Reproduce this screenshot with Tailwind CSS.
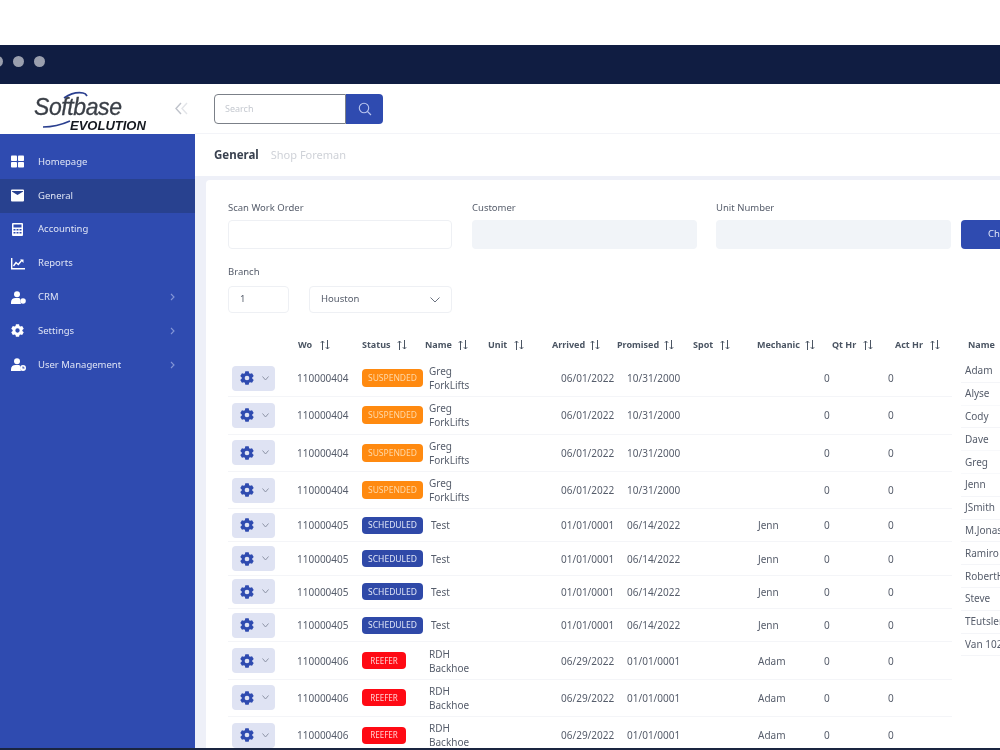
<!DOCTYPE html>
<html>
<head>
<meta charset="utf-8">
<script src="https://cdn.jsdelivr.net/npm/@tailwindcss/browser@4"></script>
<title>Softbase Evolution</title>
</head>
<body class="bg-white">
<div class="w-[1000px] h-[750px] overflow-hidden flex flex-col bg-white font-['Noto_Sans',sans-serif] text-[9.5px] text-[#565d6b] blur-[0.5px]">
  <div class="h-[45px] shrink-0 bg-white"></div>
  <div class="h-[39px] shrink-0 bg-[#101d42] flex items-center gap-[10px] -ml-[8px] pb-[6px]">
    <span class="w-[11px] h-[11px] rounded-full bg-[#9a9fae]"></span>
    <span class="w-[11px] h-[11px] rounded-full bg-[#9a9fae]"></span>
    <span class="w-[11px] h-[11px] rounded-full bg-[#9a9fae]"></span>
  </div>
  <div class="flex-1 min-h-0 flex">
    <aside class="w-[195px] shrink-0 flex flex-col">
      <div class="h-[50px] shrink-0 bg-white relative">
        <svg class="absolute left-[40px] top-[4px]" width="52" height="42" viewBox="0 0 52 42" fill="none" stroke="#2a3f8f" stroke-width="1.7"><path d="M24 10C30 6 37 4 43 5c2 .3 3 1 4 3"/><path d="M3 39C13 39 21 37 30 33"/></svg>
        <div class="absolute left-[34px] top-[11px] font-['Liberation_Sans',sans-serif] italic font-normal text-[23px] leading-[24px] tracking-[-0.4px] text-[#3a3f47] [-webkit-text-stroke:0.3px_#3a3f47]">Softbase</div>
        <div class="absolute left-[70px] top-[36px] font-['Liberation_Sans',sans-serif] italic font-bold text-[13px] leading-[12px] text-[#14181f]">EVOLUTION</div>
        <svg class="absolute left-[175px] top-[18px]" width="13" height="13" viewBox="0 0 13 13" fill="none" stroke-width="1.4"><path d="M6 1 1 6.500 6 12" stroke="#bfc3cb"/><path d="M12 1 7 6.500 12 12" stroke="#e2e4e8"/></svg>
      </div>
      <nav class="flex-1 bg-[#2f4bb0] pt-[11px] text-[#dfe4f5]">
        <div class="h-[33.8px] flex items-center pl-[11px]">
          <svg class="w-[13px] h-[13px] mr-[14px]" viewBox="0 0 13 13" fill="#fff"><rect x="0" y="0.5" width="6" height="5.5" rx="0.8"/><rect x="7" y="0.5" width="6" height="5.5" rx="0.8"/><rect x="0" y="7" width="6" height="5.5" rx="0.8"/><rect x="7" y="7" width="6" height="5.5" rx="0.8"/></svg>
          <span>Homepage</span>
        </div>
        <div class="h-[33.8px] flex items-center pl-[11px] bg-[#28418f]">
          <svg class="w-[13px] h-[13px] mr-[14px]" viewBox="0 0 13 13" fill="#fff"><path fill-rule="evenodd" d="M1 .5h11a1 1 0 0 1 1 1v10a1 1 0 0 1-1 1H1a1 1 0 0 1-1-1v-10a1 1 0 0 1 1-1zM.8 2.500 6.500 6 12.200 2.500 12 2H1z"/></svg>
          <span>General</span>
        </div>
        <div class="h-[33.8px] flex items-center pl-[11px]">
          <svg class="w-[13px] h-[13px] mr-[14px]" viewBox="0 0 13 13" fill="#fff"><path fill-rule="evenodd" d="M2 0h9a1 1 0 0 1 1 1v11a1 1 0 0 1-1 1H2a1 1 0 0 1-1-1V1a1 1 0 0 1 1-1zm.5 1.500v3h8v-3zm0 4.500v1.500h2V6zm3 0v1.500h2V6zm3 0v1.500h2V6zm-6 3v1.500h2V9zm3 0v1.500h2V9zm3 0v1.500h2V9z"/></svg>
          <span>Accounting</span>
        </div>
        <div class="h-[33.8px] flex items-center pl-[11px]">
          <svg class="w-[14px] h-[13px] mr-[13px]" viewBox="0 0 14 13" fill="none" stroke="#fff"><path d="M.7 1v10.800H14" stroke-width="1.400"/><path d="M2.500 9 5 5.500l2.300 2L11 3" stroke-width="1.400"/><path d="M9 2.500h3.500V6z" fill="#fff" stroke="none"/></svg>
          <span>Reports</span>
        </div>
        <div class="h-[33.8px] flex items-center pl-[11px] pr-[20px]">
          <svg class="w-[15px] h-[13px] mr-[12px]" viewBox="0 0 15 13" fill="#fff"><circle cx="6" cy="3.200" r="3"/><path d="M0 13v-1.800C0 8.500 2 7 4.500 7h3C8.200 7 9 7.300 9 8c0 2 .5 3.500 1 5z"/><circle cx="12" cy="10" r="2.800"/></svg>
          <span class="flex-1">CRM</span>
          <svg width="5" height="8" viewBox="0 0 5 8" fill="none" stroke="#8496d6" stroke-width="1.100"><path d="M1 1l3 3-3 3"/></svg>
        </div>
        <div class="h-[33.8px] flex items-center pl-[11px] pr-[20px]">
          <svg class="w-[13px] h-[13px] mr-[14px]" viewBox="0 0 24 24" fill="#fff"><path fill-rule="evenodd" d="M9.100.36H14.900L15.660 3.780 17.290 4.720 20.630 3.660 23.540 8.690 20.950 11.060V12.940L23.540 15.310 20.630 20.340 17.290 19.280 15.660 20.220 14.900 23.640H9.100L8.340 20.220 6.710 19.280 3.370 20.340.46 15.310 3.050 12.940V11.060L.46 8.690 3.370 3.660 6.710 4.720 8.340 3.780ZM12 8a4 4 0 1 0 0 8 4 4 0 0 0 0-8Z"/></svg>
          <span class="flex-1">Settings</span>
          <svg width="5" height="8" viewBox="0 0 5 8" fill="none" stroke="#8496d6" stroke-width="1.100"><path d="M1 1l3 3-3 3"/></svg>
        </div>
        <div class="h-[33.8px] flex items-center pl-[11px] pr-[20px]">
          <svg class="w-[15px] h-[13px] mr-[12px]" viewBox="0 0 15 13" fill="#fff"><circle cx="6" cy="3.200" r="3"/><path d="M0 13v-1.800C0 8.500 2 7 4.500 7h3C8.200 7 9 7.300 9 8c0 2 .5 3.500 1 5z"/><path fill-rule="evenodd" d="M12 7a3 3 0 1 1 0 6 3 3 0 0 1 0-6zm-.5 1.500v2h2v-1h-1v-1z"/></svg>
          <span class="flex-1">User Management</span>
          <svg width="5" height="8" viewBox="0 0 5 8" fill="none" stroke="#8496d6" stroke-width="1.100"><path d="M1 1l3 3-3 3"/></svg>
        </div>
      </nav>
    </aside>
    <main class="flex-1 min-w-0 flex flex-col bg-[#eef0f8]">
      <div class="h-[50px] shrink-0 bg-white border-b border-[#f3f4f8] pl-[19px] flex items-center">
        <div class="flex w-[169px] h-[30px] rounded-[4px]">
          <div class="w-[132px] border border-[#7b8088] rounded-l-[4px] pl-[10px] flex items-center text-[9px] text-[#c5c9d0]">Search</div>
          <div class="flex-1 bg-[#2f4bb0] rounded-r-[4px] flex items-center justify-center">
            <svg width="14" height="14" viewBox="0 0 14 14" fill="none" stroke="#b9c5ee" stroke-width="1.100"><circle cx="6" cy="6" r="4.700"/><path d="M9.500 9.500 13 13"/></svg>
          </div>
        </div>
      </div>
      <div class="h-[42px] shrink-0 bg-white pl-[19px] flex items-center gap-[12px]">
        <span class="text-[11.5px] font-bold text-[#3a4250]">General</span>
        <span class="text-[11px] text-[#cfd2d8]">Shop Foreman</span>
      </div>
      <section class="flex-1 min-h-0 ml-[11px] mt-[4px] bg-white rounded-tl-[4px] pl-[22px] pt-[21px] overflow-hidden">
        <div class="flex items-end">
          <label class="w-[224px] shrink-0 mr-[20px] flex flex-col gap-[5px]"><span class="leading-[14px]">Scan Work Order</span><span class="h-[29px] rounded-[4px] border border-[#eef0f4] bg-white"></span></label>
          <label class="w-[225px] shrink-0 mr-[19px] flex flex-col gap-[5px]"><span class="leading-[14px]">Customer</span><span class="h-[29px] rounded-[4px] bg-[#f1f4f8]"></span></label>
          <label class="w-[235px] shrink-0 mr-[10px] flex flex-col gap-[5px]"><span class="leading-[14px]">Unit Number</span><span class="h-[29px] rounded-[4px] bg-[#f1f4f8]"></span></label>
          <div class="w-[90px] shrink-0 h-[29px] rounded-[4px] bg-[#2f4bb0] text-[#dfe5f7] pl-[27px] flex items-center whitespace-nowrap">Check In</div>
        </div>
        <div class="mt-[16px] leading-[14px]">Branch</div>
        <div class="mt-[7px] flex gap-[20px]">
          <div class="w-[61px] h-[27px] rounded-[4px] border border-[#eef0f4] pl-[11px] flex items-center">1</div>
          <div class="w-[143px] h-[27px] rounded-[4px] border border-[#eef0f4] px-[11px] flex items-center justify-between">
            <span>Houston</span>
            <svg width="10" height="6" viewBox="0 0 10 6" fill="none" stroke="#6b7280" stroke-width="1"><path d="M.5.500 5 5l4.500-4.500"/></svg>
          </div>
        </div>
        <div class="mt-[17px] flex gap-[9px] w-[900px]">
          <div class="w-[724px] shrink-0">
            <div class="h-[30px] grid grid-cols-[70px_64px_63px_63px_64px_65px_76px_64px_75px_63px_57px] items-center font-bold text-[9px] text-[#4b5563]">
              <span></span>
              <span class="flex items-center gap-[8px]">Wo <svg width="10" height="10" viewBox="0 0 10 10" fill="none" stroke="#4b5563"><path d="M2.500 10V1M.8 2.800 2.500 1l1.700 1.800M7.500 0v9M5.800 7.200 7.500 9l1.700-1.800"/></svg></span>
              <span class="flex items-center gap-[6px]">Status <svg width="10" height="10" viewBox="0 0 10 10" fill="none" stroke="#4b5563"><path d="M2.500 10V1M.8 2.800 2.500 1l1.700 1.800M7.500 0v9M5.800 7.200 7.500 9l1.700-1.800"/></svg></span>
              <span class="flex items-center gap-[6px]">Name <svg width="10" height="10" viewBox="0 0 10 10" fill="none" stroke="#4b5563"><path d="M2.500 10V1M.8 2.800 2.500 1l1.700 1.800M7.500 0v9M5.800 7.200 7.500 9l1.700-1.800"/></svg></span>
              <span class="flex items-center gap-[7px]">Unit <svg width="10" height="10" viewBox="0 0 10 10" fill="none" stroke="#4b5563"><path d="M2.500 10V1M.8 2.800 2.500 1l1.700 1.800M7.500 0v9M5.800 7.200 7.500 9l1.700-1.800"/></svg></span>
              <span class="flex items-center gap-[5px]">Arrived <svg width="10" height="10" viewBox="0 0 10 10" fill="none" stroke="#4b5563"><path d="M2.500 10V1M.8 2.800 2.500 1l1.700 1.800M7.500 0v9M5.800 7.200 7.500 9l1.700-1.800"/></svg></span>
              <span class="flex items-center gap-[5px]">Promised <svg width="10" height="10" viewBox="0 0 10 10" fill="none" stroke="#4b5563"><path d="M2.500 10V1M.8 2.800 2.500 1l1.700 1.800M7.500 0v9M5.800 7.200 7.500 9l1.700-1.800"/></svg></span>
              <span class="flex items-center gap-[7px]">Spot <svg width="10" height="10" viewBox="0 0 10 10" fill="none" stroke="#4b5563"><path d="M2.500 10V1M.8 2.800 2.500 1l1.700 1.800M7.500 0v9M5.800 7.200 7.500 9l1.700-1.800"/></svg></span>
              <span class="flex items-center gap-[5px]">Mechanic <svg width="10" height="10" viewBox="0 0 10 10" fill="none" stroke="#4b5563"><path d="M2.500 10V1M.8 2.800 2.500 1l1.700 1.800M7.500 0v9M5.800 7.200 7.500 9l1.700-1.800"/></svg></span>
              <span class="flex items-center gap-[7px]">Qt Hr <svg width="10" height="10" viewBox="0 0 10 10" fill="none" stroke="#4b5563"><path d="M2.500 10V1M.8 2.800 2.500 1l1.700 1.800M7.500 0v9M5.800 7.200 7.500 9l1.700-1.800"/></svg></span>
              <span class="flex items-center gap-[7px] whitespace-nowrap">Act Hr <svg width="10" height="10" viewBox="0 0 10 10" fill="none" stroke="#4b5563"><path d="M2.500 10V1M.8 2.800 2.500 1l1.700 1.800M7.500 0v9M5.800 7.200 7.500 9l1.700-1.800"/></svg></span>
            </div>

            <!-- rows: suspended -->
            <div class="h-[37.3px] grid grid-cols-[69px_65px_67px_55px_77px_66px_66px_65px_66px_64px_64px] items-center border-b border-[#f4f5f8] text-[10px] leading-[14px]">
              <div class="ml-[4px] w-[43px] h-[25px] rounded-[4px] bg-[#dfe3f3] flex items-center pl-[8px] gap-[8px]"><svg width="14" height="14" viewBox="0 0 24 24" fill="#2f4bb0"><path fill-rule="evenodd" d="M9.100.36H14.900L15.660 3.780 17.290 4.720 20.630 3.660 23.540 8.690 20.950 11.060V12.940L23.540 15.310 20.630 20.340 17.290 19.280 15.660 20.220 14.900 23.640H9.100L8.340 20.220 6.710 19.280 3.370 20.340.46 15.310 3.050 12.940V11.060L.46 8.690 3.370 3.660 6.710 4.720 8.340 3.780ZM12 8a4 4 0 1 0 0 8 4 4 0 0 0 0-8Z"/></svg><svg width="7" height="5" viewBox="0 0 7 5" fill="none" stroke="#8d94a6"><path d="M.5.500 3.500 4l3-3.500"/></svg></div>
              <span>110000404</span>
              <div><span class="flex items-center justify-center w-[61px] h-[18px] rounded-[4px] bg-[#ff8a10] text-[#ffd8a6] text-[8.5px]">SUSPENDED</span></div>
              <span>Greg ForkLifts</span><span></span><span>06/01/2022</span><span>10/31/2000</span><span></span><span></span><span>0</span><span>0</span>
            </div>
            <div class="h-[37.3px] grid grid-cols-[69px_65px_67px_55px_77px_66px_66px_65px_66px_64px_64px] items-center border-b border-[#f4f5f8] text-[10px] leading-[14px]">
              <div class="ml-[4px] w-[43px] h-[25px] rounded-[4px] bg-[#dfe3f3] flex items-center pl-[8px] gap-[8px]"><svg width="14" height="14" viewBox="0 0 24 24" fill="#2f4bb0"><path fill-rule="evenodd" d="M9.100.36H14.900L15.660 3.780 17.290 4.720 20.630 3.660 23.540 8.690 20.950 11.060V12.940L23.540 15.310 20.630 20.340 17.290 19.280 15.660 20.220 14.900 23.640H9.100L8.340 20.220 6.710 19.280 3.370 20.340.46 15.310 3.050 12.940V11.060L.46 8.690 3.370 3.660 6.710 4.720 8.340 3.780ZM12 8a4 4 0 1 0 0 8 4 4 0 0 0 0-8Z"/></svg><svg width="7" height="5" viewBox="0 0 7 5" fill="none" stroke="#8d94a6"><path d="M.5.500 3.500 4l3-3.500"/></svg></div>
              <span>110000404</span>
              <div><span class="flex items-center justify-center w-[61px] h-[18px] rounded-[4px] bg-[#ff8a10] text-[#ffd8a6] text-[8.5px]">SUSPENDED</span></div>
              <span>Greg ForkLifts</span><span></span><span>06/01/2022</span><span>10/31/2000</span><span></span><span></span><span>0</span><span>0</span>
            </div>
            <div class="h-[37.3px] grid grid-cols-[69px_65px_67px_55px_77px_66px_66px_65px_66px_64px_64px] items-center border-b border-[#f4f5f8] text-[10px] leading-[14px]">
              <div class="ml-[4px] w-[43px] h-[25px] rounded-[4px] bg-[#dfe3f3] flex items-center pl-[8px] gap-[8px]"><svg width="14" height="14" viewBox="0 0 24 24" fill="#2f4bb0"><path fill-rule="evenodd" d="M9.100.36H14.900L15.660 3.780 17.290 4.720 20.630 3.660 23.540 8.690 20.950 11.060V12.940L23.540 15.310 20.630 20.340 17.290 19.280 15.660 20.220 14.900 23.640H9.100L8.340 20.220 6.710 19.280 3.370 20.340.46 15.310 3.050 12.940V11.060L.46 8.690 3.370 3.660 6.710 4.720 8.340 3.780ZM12 8a4 4 0 1 0 0 8 4 4 0 0 0 0-8Z"/></svg><svg width="7" height="5" viewBox="0 0 7 5" fill="none" stroke="#8d94a6"><path d="M.5.500 3.500 4l3-3.500"/></svg></div>
              <span>110000404</span>
              <div><span class="flex items-center justify-center w-[61px] h-[18px] rounded-[4px] bg-[#ff8a10] text-[#ffd8a6] text-[8.5px]">SUSPENDED</span></div>
              <span>Greg ForkLifts</span><span></span><span>06/01/2022</span><span>10/31/2000</span><span></span><span></span><span>0</span><span>0</span>
            </div>
            <div class="h-[37.3px] grid grid-cols-[69px_65px_67px_55px_77px_66px_66px_65px_66px_64px_64px] items-center border-b border-[#f4f5f8] text-[10px] leading-[14px]">
              <div class="ml-[4px] w-[43px] h-[25px] rounded-[4px] bg-[#dfe3f3] flex items-center pl-[8px] gap-[8px]"><svg width="14" height="14" viewBox="0 0 24 24" fill="#2f4bb0"><path fill-rule="evenodd" d="M9.100.36H14.900L15.660 3.780 17.290 4.720 20.630 3.660 23.540 8.690 20.950 11.060V12.940L23.540 15.310 20.630 20.340 17.290 19.280 15.660 20.220 14.900 23.640H9.100L8.340 20.220 6.710 19.280 3.370 20.340.46 15.310 3.050 12.940V11.060L.46 8.690 3.370 3.660 6.710 4.720 8.340 3.780ZM12 8a4 4 0 1 0 0 8 4 4 0 0 0 0-8Z"/></svg><svg width="7" height="5" viewBox="0 0 7 5" fill="none" stroke="#8d94a6"><path d="M.5.500 3.500 4l3-3.500"/></svg></div>
              <span>110000404</span>
              <div><span class="flex items-center justify-center w-[61px] h-[18px] rounded-[4px] bg-[#ff8a10] text-[#ffd8a6] text-[8.5px]">SUSPENDED</span></div>
              <span>Greg ForkLifts</span><span></span><span>06/01/2022</span><span>10/31/2000</span><span></span><span></span><span>0</span><span>0</span>
            </div>

            <!-- rows: scheduled -->
            <div class="h-[33.3px] grid grid-cols-[69px_65px_67px_55px_77px_66px_66px_65px_66px_64px_64px] items-center border-b border-[#f4f5f8] text-[10px] leading-[14px]">
              <div class="ml-[4px] w-[43px] h-[25px] rounded-[4px] bg-[#dfe3f3] flex items-center pl-[8px] gap-[8px]"><svg width="14" height="14" viewBox="0 0 24 24" fill="#2f4bb0"><path fill-rule="evenodd" d="M9.100.36H14.900L15.660 3.780 17.290 4.720 20.630 3.660 23.540 8.690 20.950 11.060V12.940L23.540 15.310 20.630 20.340 17.290 19.280 15.660 20.220 14.900 23.640H9.100L8.340 20.220 6.710 19.280 3.370 20.340.46 15.310 3.050 12.940V11.060L.46 8.690 3.370 3.660 6.710 4.720 8.340 3.780ZM12 8a4 4 0 1 0 0 8 4 4 0 0 0 0-8Z"/></svg><svg width="7" height="5" viewBox="0 0 7 5" fill="none" stroke="#8d94a6"><path d="M.5.500 3.500 4l3-3.500"/></svg></div>
              <span>110000405</span>
              <div><span class="flex items-center justify-center w-[61px] h-[17px] rounded-[4px] bg-[#2f49a8] text-[#dfe5f7] text-[8.5px]">SCHEDULED</span></div>
              <span class="ml-[2px]">Test</span><span></span><span>01/01/0001</span><span>06/14/2022</span><span></span><span>Jenn</span><span>0</span><span>0</span>
            </div>
            <div class="h-[33.3px] grid grid-cols-[69px_65px_67px_55px_77px_66px_66px_65px_66px_64px_64px] items-center border-b border-[#f4f5f8] text-[10px] leading-[14px]">
              <div class="ml-[4px] w-[43px] h-[25px] rounded-[4px] bg-[#dfe3f3] flex items-center pl-[8px] gap-[8px]"><svg width="14" height="14" viewBox="0 0 24 24" fill="#2f4bb0"><path fill-rule="evenodd" d="M9.100.36H14.900L15.660 3.780 17.290 4.720 20.630 3.660 23.540 8.690 20.950 11.060V12.940L23.540 15.310 20.630 20.340 17.290 19.280 15.660 20.220 14.900 23.640H9.100L8.340 20.220 6.710 19.280 3.370 20.340.46 15.310 3.050 12.940V11.060L.46 8.690 3.370 3.660 6.710 4.720 8.340 3.780ZM12 8a4 4 0 1 0 0 8 4 4 0 0 0 0-8Z"/></svg><svg width="7" height="5" viewBox="0 0 7 5" fill="none" stroke="#8d94a6"><path d="M.5.500 3.500 4l3-3.500"/></svg></div>
              <span>110000405</span>
              <div><span class="flex items-center justify-center w-[61px] h-[17px] rounded-[4px] bg-[#2f49a8] text-[#dfe5f7] text-[8.5px]">SCHEDULED</span></div>
              <span class="ml-[2px]">Test</span><span></span><span>01/01/0001</span><span>06/14/2022</span><span></span><span>Jenn</span><span>0</span><span>0</span>
            </div>
            <div class="h-[33.3px] grid grid-cols-[69px_65px_67px_55px_77px_66px_66px_65px_66px_64px_64px] items-center border-b border-[#f4f5f8] text-[10px] leading-[14px]">
              <div class="ml-[4px] w-[43px] h-[25px] rounded-[4px] bg-[#dfe3f3] flex items-center pl-[8px] gap-[8px]"><svg width="14" height="14" viewBox="0 0 24 24" fill="#2f4bb0"><path fill-rule="evenodd" d="M9.100.36H14.900L15.660 3.780 17.290 4.720 20.630 3.660 23.540 8.690 20.950 11.060V12.940L23.540 15.310 20.630 20.340 17.290 19.280 15.660 20.220 14.900 23.640H9.100L8.340 20.220 6.710 19.280 3.370 20.340.46 15.310 3.050 12.940V11.060L.46 8.690 3.370 3.660 6.710 4.720 8.340 3.780ZM12 8a4 4 0 1 0 0 8 4 4 0 0 0 0-8Z"/></svg><svg width="7" height="5" viewBox="0 0 7 5" fill="none" stroke="#8d94a6"><path d="M.5.500 3.500 4l3-3.500"/></svg></div>
              <span>110000405</span>
              <div><span class="flex items-center justify-center w-[61px] h-[17px] rounded-[4px] bg-[#2f49a8] text-[#dfe5f7] text-[8.5px]">SCHEDULED</span></div>
              <span class="ml-[2px]">Test</span><span></span><span>01/01/0001</span><span>06/14/2022</span><span></span><span>Jenn</span><span>0</span><span>0</span>
            </div>
            <div class="h-[33.3px] grid grid-cols-[69px_65px_67px_55px_77px_66px_66px_65px_66px_64px_64px] items-center border-b border-[#f4f5f8] text-[10px] leading-[14px]">
              <div class="ml-[4px] w-[43px] h-[25px] rounded-[4px] bg-[#dfe3f3] flex items-center pl-[8px] gap-[8px]"><svg width="14" height="14" viewBox="0 0 24 24" fill="#2f4bb0"><path fill-rule="evenodd" d="M9.100.36H14.900L15.660 3.780 17.290 4.720 20.630 3.660 23.540 8.690 20.950 11.060V12.940L23.540 15.310 20.630 20.340 17.290 19.280 15.660 20.220 14.900 23.640H9.100L8.340 20.220 6.710 19.280 3.370 20.340.46 15.310 3.050 12.940V11.060L.46 8.690 3.370 3.660 6.710 4.720 8.340 3.780ZM12 8a4 4 0 1 0 0 8 4 4 0 0 0 0-8Z"/></svg><svg width="7" height="5" viewBox="0 0 7 5" fill="none" stroke="#8d94a6"><path d="M.5.500 3.500 4l3-3.500"/></svg></div>
              <span>110000405</span>
              <div><span class="flex items-center justify-center w-[61px] h-[17px] rounded-[4px] bg-[#2f49a8] text-[#dfe5f7] text-[8.5px]">SCHEDULED</span></div>
              <span class="ml-[2px]">Test</span><span></span><span>01/01/0001</span><span>06/14/2022</span><span></span><span>Jenn</span><span>0</span><span>0</span>
            </div>

            <!-- rows: reefer -->
            <div class="h-[37.3px] grid grid-cols-[69px_65px_67px_55px_77px_66px_66px_65px_66px_64px_64px] items-center border-b border-[#f4f5f8] text-[10px] leading-[14px]">
              <div class="ml-[4px] w-[43px] h-[25px] rounded-[4px] bg-[#dfe3f3] flex items-center pl-[8px] gap-[8px]"><svg width="14" height="14" viewBox="0 0 24 24" fill="#2f4bb0"><path fill-rule="evenodd" d="M9.100.36H14.900L15.660 3.780 17.290 4.720 20.630 3.660 23.540 8.690 20.950 11.060V12.940L23.540 15.310 20.630 20.340 17.290 19.280 15.660 20.220 14.900 23.640H9.100L8.340 20.220 6.710 19.280 3.370 20.340.46 15.310 3.050 12.940V11.060L.46 8.690 3.370 3.660 6.710 4.720 8.340 3.780ZM12 8a4 4 0 1 0 0 8 4 4 0 0 0 0-8Z"/></svg><svg width="7" height="5" viewBox="0 0 7 5" fill="none" stroke="#8d94a6"><path d="M.5.500 3.500 4l3-3.500"/></svg></div>
              <span>110000406</span>
              <div><span class="flex items-center justify-center w-[44px] h-[17px] rounded-[4px] bg-[#ff0a14] text-[#ffd0d0] text-[8px]">REEFER</span></div>
              <span>RDH Backhoe</span><span></span><span>06/29/2022</span><span>01/01/0001</span><span></span><span>Adam</span><span>0</span><span>0</span>
            </div>
            <div class="h-[37.3px] grid grid-cols-[69px_65px_67px_55px_77px_66px_66px_65px_66px_64px_64px] items-center border-b border-[#f4f5f8] text-[10px] leading-[14px]">
              <div class="ml-[4px] w-[43px] h-[25px] rounded-[4px] bg-[#dfe3f3] flex items-center pl-[8px] gap-[8px]"><svg width="14" height="14" viewBox="0 0 24 24" fill="#2f4bb0"><path fill-rule="evenodd" d="M9.100.36H14.900L15.660 3.780 17.290 4.720 20.630 3.660 23.540 8.690 20.950 11.060V12.940L23.540 15.310 20.630 20.340 17.290 19.280 15.660 20.220 14.900 23.640H9.100L8.340 20.220 6.710 19.280 3.370 20.340.46 15.310 3.050 12.940V11.060L.46 8.690 3.370 3.660 6.710 4.720 8.340 3.780ZM12 8a4 4 0 1 0 0 8 4 4 0 0 0 0-8Z"/></svg><svg width="7" height="5" viewBox="0 0 7 5" fill="none" stroke="#8d94a6"><path d="M.5.500 3.500 4l3-3.500"/></svg></div>
              <span>110000406</span>
              <div><span class="flex items-center justify-center w-[44px] h-[17px] rounded-[4px] bg-[#ff0a14] text-[#ffd0d0] text-[8px]">REEFER</span></div>
              <span>RDH Backhoe</span><span></span><span>06/29/2022</span><span>01/01/0001</span><span></span><span>Adam</span><span>0</span><span>0</span>
            </div>
            <div class="h-[37.3px] grid grid-cols-[69px_65px_67px_55px_77px_66px_66px_65px_66px_64px_64px] items-center border-b border-[#f4f5f8] text-[10px] leading-[14px]">
              <div class="ml-[4px] w-[43px] h-[25px] rounded-[4px] bg-[#dfe3f3] flex items-center pl-[8px] gap-[8px]"><svg width="14" height="14" viewBox="0 0 24 24" fill="#2f4bb0"><path fill-rule="evenodd" d="M9.100.36H14.900L15.660 3.780 17.290 4.720 20.630 3.660 23.540 8.690 20.950 11.060V12.940L23.540 15.310 20.630 20.340 17.290 19.280 15.660 20.220 14.900 23.640H9.100L8.340 20.220 6.710 19.280 3.370 20.340.46 15.310 3.050 12.940V11.060L.46 8.690 3.370 3.660 6.710 4.720 8.340 3.780ZM12 8a4 4 0 1 0 0 8 4 4 0 0 0 0-8Z"/></svg><svg width="7" height="5" viewBox="0 0 7 5" fill="none" stroke="#8d94a6"><path d="M.5.500 3.500 4l3-3.500"/></svg></div>
              <span>110000406</span>
              <div><span class="flex items-center justify-center w-[44px] h-[17px] rounded-[4px] bg-[#ff0a14] text-[#ffd0d0] text-[8px]">REEFER</span></div>
              <span>RDH Backhoe</span><span></span><span>06/29/2022</span><span>01/01/0001</span><span></span><span>Adam</span><span>0</span><span>0</span>
            </div>
          </div>

          <!-- mechanics list -->
          <div class="w-[120px] shrink-0 text-[10px]">
            <div class="h-[30px] flex items-center pl-[7px] font-bold text-[9px] text-[#4b5563]">Name</div>
            <div class="h-[22.8px] pl-[4px] flex items-center border-b border-[#f4f5f8]">Adam</div>
            <div class="h-[22.8px] pl-[4px] flex items-center border-b border-[#f8f9fb]">Alyse</div>
            <div class="h-[22.8px] pl-[4px] flex items-center border-b border-[#f4f5f8]">Cody</div>
            <div class="h-[22.8px] pl-[4px] flex items-center border-b border-[#f8f9fb]">Dave</div>
            <div class="h-[22.8px] pl-[4px] flex items-center border-b border-[#f8f9fb]">Greg</div>
            <div class="h-[22.8px] pl-[4px] flex items-center border-b border-[#f4f5f8]">Jenn</div>
            <div class="h-[22.8px] pl-[4px] flex items-center border-b border-[#f4f5f8]">JSmith</div>
            <div class="h-[22.8px] pl-[4px] flex items-center border-b border-[#f4f5f8]">M.Jonas</div>
            <div class="h-[22.8px] pl-[4px] flex items-center border-b border-[#f4f5f8]">Ramiro</div>
            <div class="h-[22.8px] pl-[4px] flex items-center border-b border-[#f4f5f8]">RobertH</div>
            <div class="h-[22.8px] pl-[4px] flex items-center border-b border-[#f4f5f8]">Steve</div>
            <div class="h-[22.8px] pl-[4px] flex items-center border-b border-[#f4f5f8]">TEutsler</div>
            <div class="h-[22.8px] pl-[4px] flex items-center border-b border-[#f4f5f8]">Van 102</div>
          </div>
        </div>
      </section>
    </main>
  </div>
  <div class="h-[2px] shrink-0 bg-[#1a2540]"></div>
</div>
</body>
</html>
